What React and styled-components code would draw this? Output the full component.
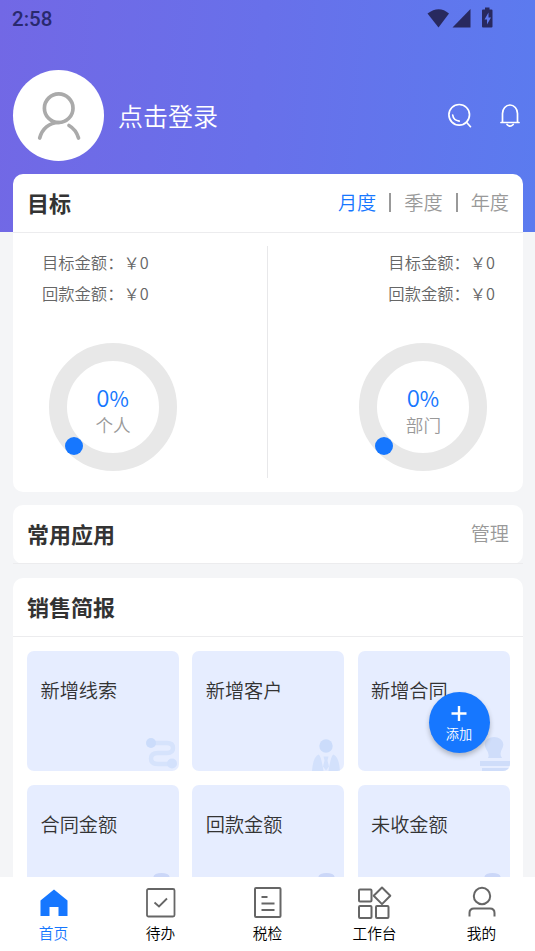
import React from "react";
import styled, { createGlobalStyle } from "styled-components";

const GlobalStyle = createGlobalStyle`
  * { box-sizing: border-box; }
  body { margin: 0; font-family: "Noto Sans CJK SC", sans-serif; font-weight: 350; color: #333; }
  svg { display: block; }
`;

const Screen = styled.div`
  position: relative;
  display: flex;
  flex-direction: column;
  height: 951px;
  width: 535px;
  overflow: hidden;
  background: #f4f5f7;
`;

const Header = styled.header`
  flex: none;
  height: 232px;
  background: linear-gradient(95deg, #7268e5 0%, #6870ea 48%, #5b7bef 100%);
`;

const StatusBar = styled.div`
  display: flex;
  justify-content: space-between;
  align-items: center;
  height: 38px;
  padding: 0 41px 0 12px;
  color: #29296e;
`;

const Clock = styled.span`
  font: 500 20.5px/38px Roboto, sans-serif;
`;

const Profile = styled.div`
  display: flex;
  align-items: center;
  height: 91px;
  margin-top: 32px;
  padding: 0 14px 0 13px;
`;

const Avatar = styled.div`
  width: 91px;
  height: 91px;
  border-radius: 50%;
  background: #fff;
`;

const LoginText = styled.span`
  flex: 1;
  margin: 0 0 2px 14px;
  color: #fff;
  font-size: 25px;
  line-height: 36px;
`;

const HeaderActions = styled.div`
  display: flex;
  align-items: center;
  gap: 27px;
`;

const Content = styled.main`
  flex: 1;
  min-height: 0;
  overflow: hidden;
  display: flex;
  flex-direction: column;
  gap: 13px;
  margin-top: -58px;
  padding: 0 12px 0 13px;
`;

const Card = styled.section`
  flex: none;
  height: ${(p) => p.$height}px;
  background: #fff;
  border-radius: 10px;
`;

const CardHead = styled.div`
  display: flex;
  align-items: center;
  justify-content: space-between;
  height: 59px;
  padding: 0 14px 2px;
  border-bottom: 1px solid #ececee;
`;

const AppsCard = styled(Card)`
  margin-bottom: 1px;
`;

const Title = styled.h2`
  margin: 0;
  font-size: 22px;
  line-height: 32px;
  font-weight: 700;
`;

const Tabs = styled.div`
  display: flex;
  align-items: center;
`;

const Tab = styled.span`
  font-size: 19.2px;
  line-height: 28px;
  color: ${(p) => (p.$active ? "#1677ff" : "#999")};
`;

const TabDivider = styled.span`
  width: 2px;
  height: 19px;
  margin: 1px 13px 0;
  background: #999;
`;

const Goals = styled.div`
  display: grid;
  grid-template-columns: 1fr 1fr;
  height: 232px;
  margin-top: 13px;
`;

const Goal = styled.div`
  display: flex;
  flex-direction: column;
  align-items: ${(p) => (p.$end ? "flex-end" : "flex-start")};
  padding: ${(p) => (p.$end ? "0 28px 0 0" : "0 0 0 29px")};
  border-right: ${(p) => (p.$end ? "none" : "1px solid #e8e8ea")};
`;

const Amount = styled.div`
  height: 31px;
  line-height: 32px;
  font-size: 16.3px;
  color: #666;
`;

const Gauge = styled.div`
  display: grid;
  place-items: center;
  width: 128px;
  height: 128px;
  margin-top: 35px;
  margin-left: ${(p) => (p.$end ? 0 : 7)}px;
  margin-right: ${(p) => (p.$end ? 7.6 : 0)}px;
  & > * {
    grid-area: 1 / 1;
  }
`;

const GaugeLabel = styled.div`
  margin-top: 6px;
  text-align: center;
  font-size: 17.6px;
  line-height: 25px;
  color: #999;
`;

const Percent = styled.div`
  margin-left: -1px;
  font-size: 24px;
  line-height: 28px;
  color: #1677ff;
  small {
    font-size: 21px;
    font-weight: 400;
  }
`;

const Tiles = styled.div`
  display: grid;
  grid-template-columns: repeat(3, 152px);
  grid-auto-rows: 120px;
  justify-content: space-between;
  row-gap: 14px;
  padding: 14px 13.5px 0 14px;
`;

const Tile = styled.div`
  display: flex;
  flex-direction: column;
  justify-content: space-between;
  overflow: hidden;
  padding: 25px 0 0 13.5px;
  border-radius: 7px;
  background: #e6edff;
  font-size: 19.2px;
  line-height: 28px;
  svg {
    align-self: flex-end;
  }
`;

const AddButton = styled.button`
  position: absolute;
  left: 428.5px;
  top: 692px;
  display: flex;
  flex-direction: column;
  align-items: center;
  width: 61px;
  height: 61px;
  padding: 14px 0 0;
  border: 0;
  border-radius: 50%;
  background: #1677ff;
  box-shadow: 0 3px 5px rgba(0, 0, 0, 0.24);
  color: #fff;
  font: 350 13.2px/18px "Noto Sans CJK SC", sans-serif;
  svg {
    margin-bottom: 4px;
  }
`;

const BottomNav = styled.nav`
  flex: none;
  display: grid;
  grid-template-columns: repeat(5, 1fr);
  height: 74px;
  background: #fff;
`;

const NavItem = styled.div`
  display: flex;
  flex-direction: column;
  align-items: center;
  padding-top: 7px;
  font-size: 14.7px;
  line-height: 22px;
  color: ${(p) => (p.$active ? "#1677ff" : "#000")};
`;

const StatusIcons = () => (
  <svg width="66" height="22" viewBox="0 0 66 22" fill="#28295f" overflow="visible">
    <path d="M-.5 5Q11-3.500 21 5L10.500 19Z" transform="translate(0 .5)" />
    <path d="M42.500 1v18.500H24.500Z" />
    <path fillRule="evenodd" d="M57-.5h4.500v2h2q1 0 1 1V18.500q0 1-1 1H55q-1 0-1-1V2.500q0-1 1-1H57ZM60.500 4.500l-4 7h2.500v5l4-7h-2.500Z" />
  </svg>
);

const AvatarIcon = () => (
  <svg width="91" height="91" viewBox="0 0 91 91" fill="none" stroke="#aaa" strokeWidth="3.700" strokeLinecap="round">
    <circle cx="45.700" cy="38.200" r="14.300" />
    <path d="M26.700 68C29 59 36 52.500 46 52.500M56 55.500q7 4 9.500 12.500" />
  </svg>
);

const SearchIcon = () => (
  <svg width="25" height="25" viewBox="0 0 25 25" fill="none" stroke="#fff" strokeWidth="1.700" strokeLinecap="round">
    <circle cx="12.200" cy="11.800" r="10.300" />
    <path d="M19.500 19.200l4 4.500M5.700 12q.7 5.300 6.500 6.200" />
  </svg>
);

const BellIcon = () => (
  <svg width="22" height="25" viewBox="0 0 22 25" fill="none" stroke="#fff" strokeWidth="1.700" strokeLinecap="round" strokeLinejoin="round">
    <path d="M3.500 19V10.500a7.500 8.500 0 0 1 15 0V19M2 19.500h18M8 21.500q3 3.200 6.200 0" />
  </svg>
);

const Ring = () => (
  <svg width="128" height="128" viewBox="0 0 128 128">
    <circle cx="64" cy="64" r="55" fill="none" stroke="#e8e8e8" strokeWidth="18" />
    <circle cx="25" cy="103" r="9" fill="#1677ff" />
  </svg>
);

const TileIcon = ({ kind }) => (
  <svg width="34" height="34" viewBox="0 0 34 34" fill="#d3e1fc">
    {kind === "route" && (
      <>
        <path d="M5 6h17q6 0 6 5t-6 5H13q-7 0-7 5.500t7 5.500h14" fill="none" stroke="#d6e3fc" strokeWidth="4.500" />
        <circle cx="6" cy="6" r="5" fill="#cbdcfb" />
        <circle cx="27" cy="26.500" r="5" />
      </>
    )}
    {kind === "person" && (
      <>
        <circle cx="16" cy="9" r="6.700" fill="#cbdcfb" />
        <path d="M2 34Q3 20 8.500 17.500Q11 18 13.500 34ZM30 34Q29 20 23.500 17.500Q21 18 18.500 34ZM13.500 19.500h5l-1 4 1.500 6-3 4-3-4L14.500 23.500Z" />
      </>
    )}
    {kind === "stamp" && (
      <path fill="#cfddfa" d="M12 21q2-4-2-9C6 5 12 0 18 0s12 5 8 12q-3 5 0 9ZM4 24h30v5H4ZM6 31h28v3H6Z" />
    )}
    {kind === "coin" && <ellipse cx="16.500" cy="5.500" rx="8" ry="3.500" fill="#cbd7f8" />}
  </svg>
);

const iconProps = { width: 36, height: 38, viewBox: "0 0 36 38", fill: "none", stroke: "#666", strokeWidth: 2 };

const HomeIcon = () => (
  <svg {...iconProps} stroke="none">
    <path fill="#1677ff" d="M18 5.500L31.500 16.500V32H22.500V23H13.500V32H4.500V16.500Z" />
  </svg>
);

const TodoIcon = () => (
  <svg {...iconProps} strokeWidth="1.800">
    <rect x="4" y="5" width="27.500" height="27.500" rx="1.500" />
    <path d="M11.500 18.500l4.500 4 8-8" />
  </svg>
);

const TaxIcon = () => (
  <svg {...iconProps}>
    <rect x="5" y="4" width="25.500" height="29" rx="1" />
    <path d="M11.500 13h6M11.500 19.500h13M11.500 26h13" />
  </svg>
);

const WorkIcon = () => (
  <svg {...iconProps} strokeLinejoin="round">
    <rect x="2" y="5.500" width="12.500" height="12" rx="1" />
    <rect x="2" y="22" width="12.500" height="12" rx="1" />
    <rect x="19" y="22" width="12.500" height="12" rx="1" />
    <path d="M25 3.500l8.300 8.300-8.300 8.300-8.300-8.300Z" />
  </svg>
);

const MineIcon = () => (
  <svg {...iconProps}>
    <circle cx="18" cy="12" r="8.200" />
    <path d="M5.500 32.500V29q0-4.500 4.500-4.500h16q4.500 0 4.500 4.500v3.500" />
  </svg>
);

const goals = [
  { label: "个人", end: false },
  { label: "部门", end: true },
];

const tiles = [
  ["新增线索", "route"],
  ["新增客户", "person"],
  ["新增合同", "stamp"],
  ["合同金额", "coin"],
  ["回款金额", "coin"],
  ["未收金额", "coin"],
];

const navItems = [
  ["首页", HomeIcon],
  ["待办", TodoIcon],
  ["税检", TaxIcon],
  ["工作台", WorkIcon],
  ["我的", MineIcon],
];

export default function App() {
  return (
    <Screen>
      <GlobalStyle />
      <Header>
        <StatusBar>
          <Clock>2:58</Clock>
          <StatusIcons />
        </StatusBar>
        <Profile>
          <Avatar>
            <AvatarIcon />
          </Avatar>
          <LoginText>点击登录</LoginText>
          <HeaderActions>
            <SearchIcon />
            <BellIcon />
          </HeaderActions>
        </Profile>
      </Header>

      <Content>
        <Card $height={318}>
          <CardHead>
            <Title>目标</Title>
            <Tabs>
              <Tab $active>月度</Tab>
              <TabDivider />
              <Tab>季度</Tab>
              <TabDivider />
              <Tab>年度</Tab>
            </Tabs>
          </CardHead>
          <Goals>
            {goals.map((g) => (
              <Goal key={g.label} $end={g.end}>
                <Amount>目标金额：￥0</Amount>
                <Amount>回款金额：￥0</Amount>
                <Gauge $end={g.end}>
                  <Ring />
                  <GaugeLabel>
                    <Percent>
                      0<small>%</small>
                    </Percent>
                    {g.label}
                  </GaugeLabel>
                </Gauge>
              </Goal>
            ))}
          </Goals>
        </Card>

        <AppsCard $height={59}>
          <CardHead>
            <Title>常用应用</Title>
            <Tab>管理</Tab>
          </CardHead>
        </AppsCard>

        <Card $height={400}>
          <CardHead>
            <Title>销售简报</Title>
          </CardHead>
          <Tiles>
            {tiles.map(([name, kind]) => (
              <Tile key={name}>
                {name}
                <TileIcon kind={kind} />
              </Tile>
            ))}
          </Tiles>
        </Card>
      </Content>

      <BottomNav>
        {navItems.map(([name, Icon], i) => (
          <NavItem key={name} $active={i === 0}>
            <Icon />
            {name}
          </NavItem>
        ))}
      </BottomNav>

      <AddButton>
        <svg width="16" height="15" viewBox="0 0 16 15" stroke="#fff" strokeWidth="2.400">
          <path d="M8 0v15M.5 7.500h15" />
        </svg>
        添加
      </AddButton>
    </Screen>
  );
}
